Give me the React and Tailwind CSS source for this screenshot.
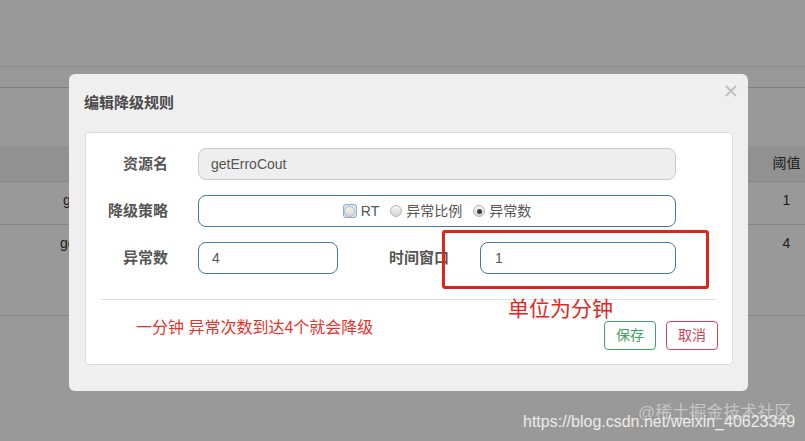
const Radio = ({ label, checked, focused }) => (
  <label className="flex items-center gap-[4px]">
    {focused ? (
      <span className="flex h-[14px] w-[14px] items-center justify-center rounded-[3px] border border-[#86acdc] bg-[#dbe5f1]">
        <span className="h-[11px] w-[11px] rounded-full border border-[#b5b5b5] bg-gradient-to-b from-[#f4f4f4] to-[#d6d6d6]" />
      </span>
    ) : (
      <span className="flex h-[12px] w-[12px] items-center justify-center rounded-full border border-[#b5b5b5] bg-gradient-to-b from-[#f4f4f4] to-[#d6d6d6]">
        {checked && <span className="h-[5px] w-[5px] rounded-full bg-[#3c3c3c]" />}
      </span>
    )}
    <span>{label}</span>
  </label>
);

const App = () => {
  return (
    <div className="relative h-[441px] w-[805px] overflow-hidden bg-white font-['Liberation_Sans','Noto_Sans_CJK_SC',sans-serif] text-[14px] text-[#333]">
      {/* page behind the dialog */}
      <div className="h-[67px] border-b border-[#e8e8e8]" />
      <div className="h-[21px] border-b border-[#d2d2d2]" />
      <div className="h-[58px]" />
      <div>
        <div className="flex h-[36px] items-center border-b border-[#dcdcdc] bg-[#f2f2f2]">
          <div className="w-[200px]" />
          <div className="flex-1" />
          <div className="w-[37px] text-center">阈值</div>
        </div>
        <div className="flex h-[43px] border-b border-[#dcdcdc] pt-[8px] leading-[20px]">
          <div className="w-[69px] overflow-hidden whitespace-nowrap pl-[63px]">getErroCout</div>
          <div className="flex-1" />
          <div className="w-[37px] text-center">1</div>
        </div>
        <div className="flex h-[91px] border-b border-[#dcdcdc] pt-[8px] leading-[20px]">
          <div className="w-[69px] overflow-hidden whitespace-nowrap pl-[60px]">getErroRatio</div>
          <div className="flex-1" />
          <div className="w-[37px] text-center">4</div>
        </div>
      </div>

      {/* backdrop */}
      <div className="absolute inset-0 bg-black/40" />

      {/* dialog */}
      <div className="absolute left-[69px] top-[74px] flex h-[317px] w-[679px] flex-col rounded-[6px] bg-[#efefef]">
        <div className="flex h-[58px] items-center px-[15px] text-[15px] font-bold text-[#4a4a4a]">
          编辑降级规则
        </div>
        <button className="absolute right-[11px] top-[11px]">
          <svg width="12" height="12" viewBox="0 0 12 12">
            <path d="M1 1 L11 11 M11 1 L1 11" stroke="#c2c2c2" strokeWidth="2.2" />
          </svg>
        </button>

        <div className="ml-[16px] mr-[15px] flex flex-col rounded-[4px] border border-[#dcdcdc] bg-white pb-[14px] pt-[15px]">
          <div className="flex items-center">
            <label className="w-[82px] text-right text-[15px] font-bold text-[#555]">资源名</label>
            <div className="ml-[30px] flex h-[32px] w-[478px] items-center rounded-[8px] border border-[#cccccc] bg-[#eeeeee] px-[12px] text-[#555]">
              getErroCout
            </div>
          </div>

          <div className="mt-[15px] flex items-center">
            <label className="w-[82px] text-right text-[15px] font-bold text-[#555]">降级策略</label>
            <div className="ml-[30px] flex h-[32px] w-[478px] items-center justify-center gap-[11px] rounded-[8px] border border-[#4677a8] text-[#555]">
              <Radio label="RT" focused />
              <Radio label="异常比例" />
              <Radio label="异常数" checked />
            </div>
          </div>

          <div className="mt-[15px] flex items-center">
            <label className="w-[82px] text-right text-[15px] font-bold text-[#555]">异常数</label>
            <div className="ml-[30px] flex h-[32px] w-[140px] items-center rounded-[8px] border border-[#4677a8] px-[13px] text-[#555]">
              4
            </div>
            <label className="w-[111px] text-right text-[15px] font-bold text-[#555]">时间窗口</label>
            <div className="ml-[31px] flex h-[32px] w-[196px] items-center rounded-[8px] border border-[#4677a8] px-[14px] text-[#555]">
              1
            </div>
          </div>

          <div className="mx-[15px] mt-[25px] border-t border-[#e2e2e2]" />

          <div className="flex items-start justify-between px-[14px] pt-[16px]">
            <p className="ml-[36px] text-[16px] leading-[24px] text-[#e5332a]">
              一分钟 异常次数到达4个就会降级
            </p>
            <div className="mt-[5px] flex gap-[10px]">
              <button className="h-[29px] w-[52px] rounded-[4px] border border-[#42a262] text-[#3f9d5e]">
                保存
              </button>
              <button className="h-[29px] w-[52px] rounded-[4px] border border-[#d2435a] text-[#cf4459]">
                取消
              </button>
            </div>
          </div>
        </div>
      </div>

      {/* annotations */}
      <div className="absolute left-[442px] top-[230px] h-[59px] w-[267px] rounded-[3px] border-[3px] border-[#e52119]" />
      <div className="absolute left-[508px] top-[296px] text-[21px] leading-[26px] text-[#e5261c]">
        单位为分钟
      </div>

      {/* watermarks */}
      <div className="absolute left-[638px] top-[403px] text-[17px] leading-[20px] text-white/45">
        @稀土掘金技术社区
      </div>
      <div className="absolute left-[523px] top-[412px] text-[16px] leading-[19px] text-white/80">
        https://blog.csdn.net/weixin_40623349
      </div>
    </div>
  );
};

export default App;
